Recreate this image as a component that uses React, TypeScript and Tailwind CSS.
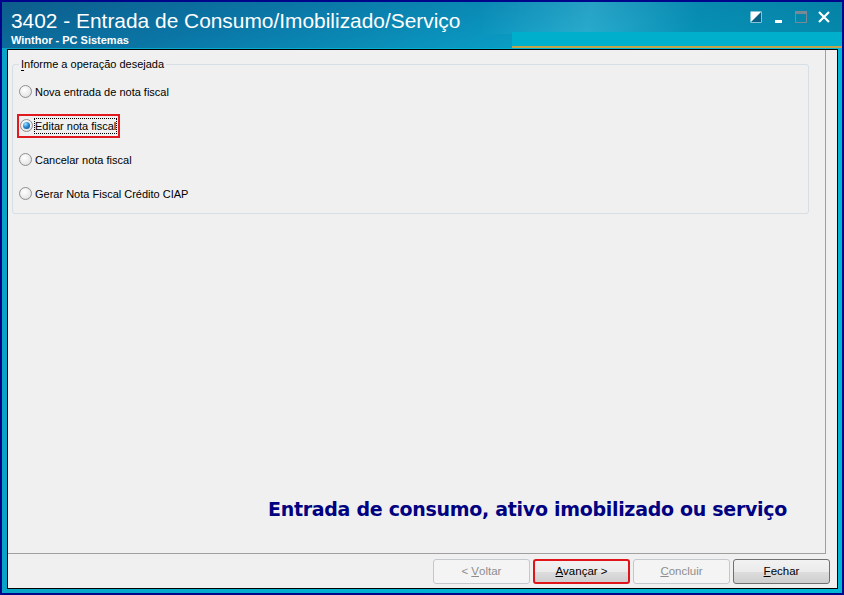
import React from "react";

const options = [
  { label: "Nova entrada de nota fiscal", checked: false },
  { label: "Editar nota fiscal", checked: true },
  { label: "Cancelar nota fiscal", checked: false },
  { label: "Gerar Nota Fiscal Crédito CIAP", checked: false },
];

function Radio({ checked }: { checked: boolean }) {
  return (
    <span className="w-[13px] h-[13px] rounded-full border border-[#8f8f8f] bg-[radial-gradient(circle_at_40%_35%,#ffffff_0%,#eaeaea_60%,#d2d2d2_100%)] flex items-center justify-center shrink-0">
      {checked && (
        <span className="w-[7px] h-[7px] rounded-full bg-[radial-gradient(circle_at_35%_30%,#a9e0ff_0%,#2a8ad4_45%,#0b3f7a_100%)]" />
      )}
    </span>
  );
}

function Btn({ children, disabled, highlight }: { children: React.ReactNode; disabled?: boolean; highlight?: boolean }) {
  return (
    <div
      className={`w-[97px] h-[25px] rounded-[3px] border flex items-center justify-center text-[11.5px] ${
        disabled
          ? "border-[#c4c8cc] bg-[#f4f4f4] text-[#8d8d8d]"
          : highlight
          ? "border-[#e0151a] border-2 bg-[linear-gradient(#f2f2f2_0%,#ebebeb_50%,#dddddd_51%,#cfcfcf_100%)] text-black"
          : "border-[#707070] bg-[linear-gradient(#f2f2f2_0%,#ebebeb_50%,#dddddd_51%,#cfcfcf_100%)] text-black"
      }`}
    >
      {children}
    </div>
  );
}

export default function App() {
  return (
    <div className="w-[844px] h-[595px] bg-[#00058a] p-[2px] font-['Liberation_Sans',Arial,sans-serif]">
      <div className="h-full flex flex-col bg-[linear-gradient(90deg,#08a4c6_0%,#00b2d0_50%,#00b8d4_100%)]">
        {/* Title bar */}
        <div className="relative h-[46px] shrink-0 overflow-hidden bg-[linear-gradient(165deg,#0d5d8c_0%,#0a76a6_30%,#0aa0c6_70%,#06bad8_100%)]">
          <div className="absolute right-0 top-0 w-[360px] h-[32px] bg-[linear-gradient(100deg,rgba(255,255,255,0)_0%,rgba(255,255,255,0.12)_30%,rgba(0,70,110,0.25)_60%,rgba(0,50,90,0.35)_100%)]" />
          <div className="absolute right-0 top-[30px] w-[330px] h-[14px] bg-[#00afcb]" />
          <div className="absolute right-0 top-[44px] w-[330px] h-[2px] bg-[#c2a24a]" />
          <div className="relative pl-[9px] pt-[6px] text-white">
            <div className="text-[20.9px] leading-[26px]">3402 - Entrada de Consumo/Imobilizado/Serviço</div>
            <div className="text-[11px] font-bold leading-[12px]">Winthor - PC Sistemas</div>
          </div>
          <div className="absolute top-[9px] right-[12px] flex items-center gap-[11px]">
            <svg width="12" height="12" viewBox="0 0 12 12">
              <rect x="0.5" y="0.5" width="11" height="11" fill="#fff" />
              <polygon points="11,1 11,11 1,11" fill="#0a5f85" />
            </svg>
            <svg width="11" height="12" viewBox="0 0 11 12">
              <rect x="2" y="9" width="7" height="3" fill="#fff" />
            </svg>
            <svg width="12" height="12" viewBox="0 0 12 12">
              <rect x="0.5" y="0.5" width="11" height="11" fill="none" stroke="#7a8a94" />
              <rect x="0" y="0" width="12" height="3" fill="#7a8a94" />
            </svg>
            <svg width="12" height="12" viewBox="0 0 12 12">
              <path d="M1 1 L11 11 M11 1 L1 11" stroke="#fff" strokeWidth="2.2" />
            </svg>
          </div>
        </div>

        {/* Client area */}
        <div className="flex-1 ml-[5px] mr-[4px] mb-[4px] mt-[1px] border border-black bg-[#f0f0f0] flex flex-col text-[11px] text-black">
          <div className="flex-1 mr-[11px] border-r border-b border-[#a0a0a0] flex flex-col">
            {/* Group box */}
            <div className="relative mt-[14px] ml-[4px] mr-[16px] h-[150px] rounded-[3px] border border-[#d5dfe5]">
              <div className="absolute -top-[8px] left-[6px] px-[2px] bg-[#f0f0f0] leading-[14px]">
                <span className="underline decoration-[1px] underline-offset-[2px]">I</span>nforme a operação desejada
              </div>
              <div className="flex flex-col gap-[21px] pt-[20px] pl-[6px]">
                {options.map((o) => (
                  <div key={o.label} className="flex items-center h-[13px]">
                    {o.checked ? (
                      <div className="flex items-center gap-[2px] -ml-[2px] pl-[1px] pr-[2px] py-[3px] border-2 border-[#e01a1e]">
                        <Radio checked />
                        <span className="leading-[14px] outline outline-1 outline-dotted outline-black">{o.label}</span>
                      </div>
                    ) : (
                      <div className="flex items-center gap-[3px]">
                        <Radio checked={false} />
                        <span className="leading-[14px]">{o.label}</span>
                      </div>
                    )}
                  </div>
                ))}
              </div>
            </div>
            <div className="flex-1" />
            <div className="flex justify-end pr-[38px] pb-[30px]">
              <span className="text-[19px] font-bold text-[#000080] font-['DejaVu_Sans',sans-serif] tracking-[-0.3px]">
                Entrada de consumo, ativo imobilizado ou serviço
              </span>
            </div>
          </div>
          <div className="h-[34px] flex items-center justify-end gap-[3px] pr-[7px] pt-[1px]">
            <Btn disabled>
              &lt; <span className="underline ml-[3px]">V</span>oltar
            </Btn>
            <Btn highlight>
              <span className="underline">A</span>vançar &gt;
            </Btn>
            <Btn disabled>
              <span className="underline">C</span>oncluir
            </Btn>
            <Btn>
              <span className="underline">F</span>echar
            </Btn>
          </div>
        </div>
      </div>
    </div>
  );
}
